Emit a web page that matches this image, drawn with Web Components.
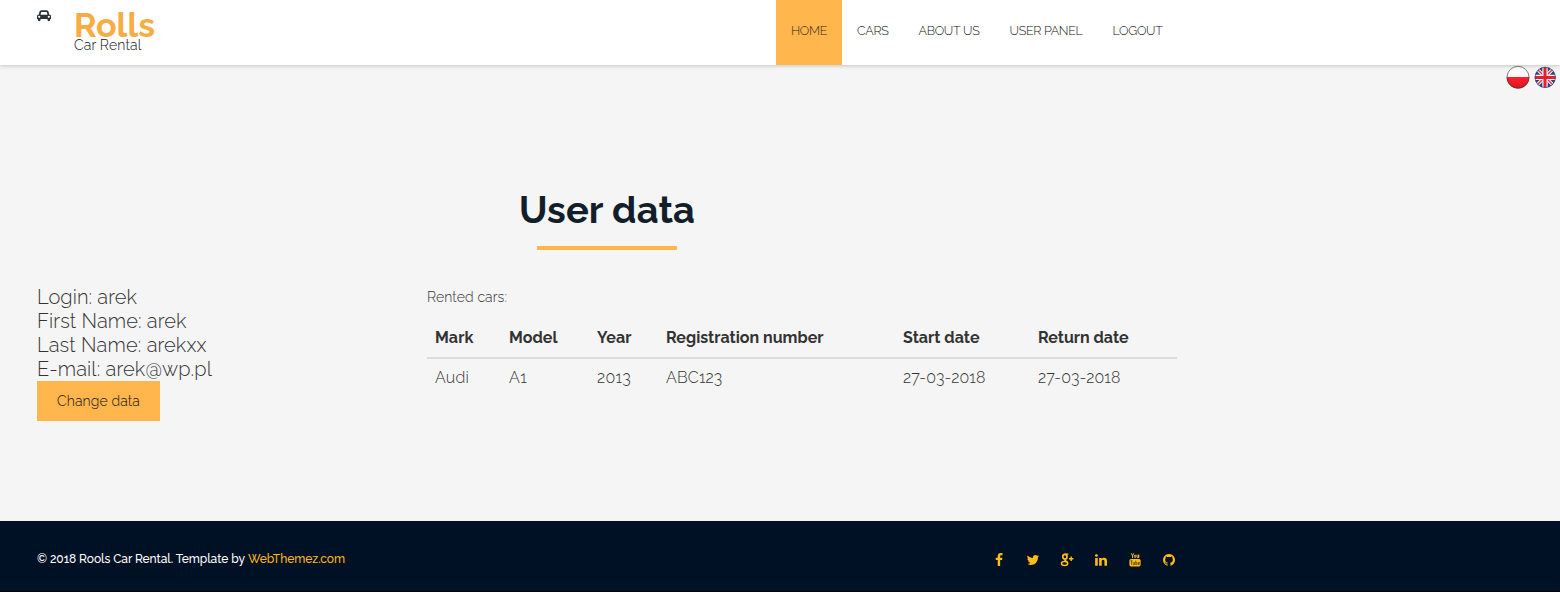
<!DOCTYPE html>
<html lang="en"><head><meta charset="utf-8"><title>Rolls Car Rental</title>
<style>
html,body{margin:0;height:592px;overflow:hidden;background:#f5f5f5}
body{font-family:Raleway,Lato,"Open Sans",sans-serif;font-weight:300;font-variant-numeric:oldstyle-nums;color:#333;font-size:14px}
</style></head><body>
<rolls-page></rolls-page>
<script>
/* Text run tracked out so that it fills the width given in its w attribute. */
customElements.define('fit-text', class extends HTMLElement{
  connectedCallback(){
    if(!this.shadowRoot) this.attachShadow({mode:'open'}).innerHTML='<style>:host{display:inline-block;white-space:nowrap;line-height:inherit}</style><slot></slot>';
    const w=+this.getAttribute('w'), n=this.textContent.length;
    this.style.width='auto';
    this.style.letterSpacing='0';
    const natural=this.getBoundingClientRect().width;
    this.style.letterSpacing=((w-natural)/n).toFixed(3)+'px';
    this.style.width=w+'px';
  }
});

const ICONS={
car:['0 0 2048 1792','<path d="M480 1088q0-66-47-113t-113-47-113 47-47 113 47 113 113 47 113-47 47-113zm36-320h1016l-89-357q-2-8-14-17.5t-21-9.5h-768q-9 0-21 9.5t-14 17.5zm1372 320q0-66-47-113t-113-47-113 47-47 113 47 113 113 47 113-47 47-113zm160-96v384q0 14-9 23t-23 9h-96v128q0 80-56 136t-136 56-136-56-56-136v-128h-1024v128q0 80-56 136t-136 56-136-56-56-136v-128h-96q-14 0-23-9t-9-23v-384q0-93 65.5-158.5t158.5-65.5h28l105-419q23-94 104-157.5t179-63.5h768q98 0 179 63.5t104 157.5l105 419h28q93 0 158.5 65.5t65.5 158.5z"/>'],
facebook:['0 0 1792 1792','<path d="M1343 12v264h-157q-86 0-116 36t-30 108v189h293l-39 296h-254v759h-306v-759h-255v-296h255v-218q0-186 104-288.5t277-102.5q147 0 228 12z"/>'],
twitter:['0 0 1792 1792','<path d="M1684 408q-67 98-162 167 1 14 1 42 0 130-38 259.5t-115.5 248.5-184.5 210.5-258 146-323 54.5q-271 0-496-145 35 4 78 4 225 0 401-138-105-2-188-64.5t-114-159.5q33 5 61 5 43 0 85-11-112-23-185.5-111.5t-73.5-205.5v-4q68 38 146 41-66-44-105-115t-39-154q0-88 44-163 121 149 294.5 238.5t371.5 99.5q-8-38-8-74 0-134 94.5-228.5t228.5-94.5q140 0 236 102 109-21 205-78-37 115-142 178 93-10 186-50z"/>'],
gplus:['0 0 14 14','<g fill="none" stroke="currentColor"><ellipse cx="4.9" cy="3.8" rx="2.1" ry="2.4" stroke-width="1.7"/><ellipse cx="4.600" cy="10.600" rx="3.100" ry="2" stroke-width="1.500"/><path d="M4.600 1.200h3.800M5 6Q3.800 7 5.500 7.600T7.500 9.500" stroke-width="1.300"/><path d="M9 5.800h4.400M11.200 3.600v4.400" stroke-width="1.400"/></g>'],
linkedin:['0 0 1792 1792','<path d="M477 625v991h-330v-991h330zm21-306q1 73-50.5 122t-135.5 49h-2q-82 0-132-49t-50-122q0-74 51.5-122.5t134.5-48.5 133 48.5 51 122.5zm1166 729v568h-329v-530q0-105-40.5-164.5t-126.5-59.5q-63 0-105.5 34.5t-63.5 85.5q-11 30-11 81v553h-329q2-399 2-647t-1-296l-1-48h329v144h-2q20-32 41-56t56.5-52 87-43.5 114.5-15.5q171 0 275 113.5t104 332.5z"/>'],
youtube:['0 0 14 14','<path d="M3 6h8q1.600 0 1.600 1.600v4.200q0 1.600-1.600 1.600H3q-1.600 0-1.600-1.600V7.600Q1.400 6 3 6z"/><g fill="none" stroke="currentColor"><path d="M3.300.3l1.200 2.500V5M5.700.3L4.500 2.800M9 1.700v2.500q.9.800 1.700 0V1.700M10.700 4.800V1.700" stroke-width="1"/><ellipse cx="7" cy="3.300" rx=".75" ry="1.300" stroke-width="1"/></g><g fill="none" stroke="#010f25" stroke-width=".5"><path d="M2.300 7.800h2.400M3.500 7.800v4.300M5.200 9v2.700h1.300V9M7.700 7.600v4.100h1.100V9.400H7.700M11.500 11.500h-1.400V9.400h1.300v1.200h-1.300"/></g>'],
github:['0 0 1792 1792','<path d="M896 128q209 0 385.500 103t279.500 279.500 103 385.500q0 251-146.500 451.500t-378.500 277.500q-27 5-40-7t-13-30q0-3 .5-76.500t.5-134.500q0-97-52-142 57-6 102.500-18t94-39 81-66.500 53-105 20.500-150.500q0-119-79-206 37-91-8-204-28-9-81 11t-92 44l-38 24q-93-26-192-26t-192 26q-16-11-42.500-27t-83.500-38.500-85-13.500q-45 113-8 204-79 87-79 206 0 85 20.500 150t52.500 105 80.500 67 94 39 102.500 18q-39 36-49 103-21 10-45 15t-57 5-65.500-21.500-55.500-62.500q-19-32-48.500-52t-49.500-24l-20-3q-21 0-29 4.500t-5 11.500 9 14 13 12l7 5q22 10 43.500 38t31.500 51l10 23q13 38 44 61.500t67 30 69.500 7 55.500-3.500l23-4q0 38 .5 88.500t.5 54.500q0 18-13 30t-40 7q-232-77-378.500-277.500t-146.500-451.500q0-209 103-385.500t279.500-279.500 385.500-103z"/>'],
poland:['0 0 24 24','<defs><clipPath id="c"><circle cx="12" cy="12.300" r="11.300"/></clipPath><linearGradient id="r" x2="0" y2="1"><stop offset="0" stop-color="#ff1f2b"/><stop offset=".5" stop-color="#f01a24"/><stop offset="1" stop-color="#c41a20"/></linearGradient></defs><g clip-path="url(#c)"><path fill="#fbfbfb" d="M0 0h24v12H0z"/><path fill="url(#r)" d="M0 12h24v12H0z"/></g><circle cx="12" cy="12.300" r="11" fill="none" stroke="#3c3434" stroke-opacity=".7" stroke-width=".9"/>'],
britain:['0 0 24 24','<defs><clipPath id="c"><circle cx="12.200" cy="12.400" r="10.400"/></clipPath></defs><g clip-path="url(#c)"><path fill="#24478c" d="M0 0h24v24H0z"/><path stroke="#f0eef4" stroke-width="3.400" d="M2 2l20 20M22 2L2 22"/><path stroke="#dd3a4a" stroke-width="1.400" d="M2 2l20 20M22 2L2 22"/><path stroke="#f5f2f5" stroke-width="5.400" d="M12 0v24M0 12.400h24"/><path stroke="#e5202f" stroke-width="3" d="M12 0v24M0 12.400h24"/></g><circle cx="12.200" cy="12.400" r="10.200" fill="none" stroke="#27345c" stroke-opacity=".8" stroke-width=".7"/>']
};
customElements.define('ui-icon', class extends HTMLElement{
  connectedCallback(){
    const [box,art]=ICONS[this.getAttribute('name')];
    this.attachShadow({mode:'open'}).innerHTML=`<style>:host{display:block;width:14px;height:14px}svg{display:block;width:100%;height:100%;fill:currentColor}</style><svg viewBox="${box}">${art}</svg>`;
  }
});

function element(name, html){
  customElements.define(name, class extends HTMLElement{
    connectedCallback(){ this.attachShadow({mode:'open'}).innerHTML=html; }
  });
}
element('nav-item',`<style>:host{display:block;height:65px;padding:0 14.500px 0 15.500px;box-sizing:border-box;line-height:62px;font-size:12.500px;font-weight:300;color:#111}:host([active]){background:#ffb64d;color:#35291a}</style><slot></slot>`);
element('site-header',`<style>
:host{display:block;height:65px;background:#fff;box-shadow:0 1px 4px rgba(0,0,0,.2);position:relative}
.in{width:1140px;margin-left:37px;display:flex;justify-content:space-between}
.brand{display:flex;color:#111}
ui-icon{width:14px;height:13px;margin:9px 23px 0 0;color:#2a3036}
.t{display:flex;flex-direction:column;align-items:flex-start;padding-top:13px}
.name{font-size:34px;line-height:24px;font-weight:700;color:#f9ac42}
.sub{font-size:14px;line-height:16px}
nav{display:flex}
</style><div class="in"><div class="brand"><ui-icon name="car"></ui-icon><div class="t"><fit-text class="name" w="81">Rolls</fit-text><fit-text class="sub" w="67.500">Car Rental</fit-text></div></div>
<nav><nav-item active><fit-text w="36">HOME</fit-text></nav-item><nav-item><fit-text w="31.500">CARS</fit-text></nav-item><nav-item><fit-text w="61">ABOUT US</fit-text></nav-item><nav-item><fit-text w="73">USER PANEL</fit-text></nav-item><nav-item><fit-text w="50">LOGOUT</fit-text></nav-item></nav></div>`);
element('language-switch',`<style>:host{display:flex;justify-content:flex-end;gap:3px;padding:0 3px 1px 0;height:24px}ui-icon{width:24px;height:24px}</style><ui-icon name="poland"></ui-icon><ui-icon name="britain"></ui-icon>`);
element('section-title',`<style>:host{display:flex;flex-direction:column;align-items:center;width:1140px;margin-left:37px;padding-top:96px;color:#131e2b;font-size:38px;line-height:48px;font-weight:700}i{display:block;width:140px;height:4px;background:#ffb64d;margin-top:12px}</style><slot></slot><i></i>`);
element('user-card',`<style>:host{display:flex;flex-direction:column;align-items:flex-start;font-size:20px;line-height:24px;width:390px}
button{font:inherit;font-size:14px;line-height:20px;border:0;background:#ffb64d;color:#111;width:123px;height:40px;padding:0}</style>
<fit-text w="100">Login: arek</fit-text><fit-text w="149.500">First Name: arek</fit-text><fit-text w="169.500">Last Name: arekxx</fit-text><fit-text w="175">E-mail: arek@wp.pl</fit-text><button><fit-text w="83">Change data</fit-text></button>`);
element('rental-table',`<style>:host{display:block;width:750px;padding-top:2px}
p{margin:0;line-height:20px}
.g{display:grid;grid-template-columns:74px 88px 69px 237px 135px 1fr;padding-left:8px;font-size:16px;line-height:24px}
.h{font-weight:700;border-bottom:2px solid #ddd;margin-top:19px;height:31px}
.r{padding-top:7px}</style>
<p><fit-text w="80">Rented cars:</fit-text></p>
<div class="g h"><span><fit-text w="38.500">Mark</fit-text></span><span><fit-text w="48.500">Model</fit-text></span><span><fit-text w="34.500">Year</fit-text></span><span><fit-text w="157.500">Registration number</fit-text></span><span><fit-text w="76.500">Start date</fit-text></span><span><fit-text w="90.500">Return date</fit-text></span></div>
<div class="g r"><span><fit-text w="34">Audi</fit-text></span><span><fit-text w="18">A1</fit-text></span><span><fit-text w="34">2013</fit-text></span><span><fit-text w="56.500">ABC123</fit-text></span><span><fit-text w="82.500">27-03-2018</fit-text></span><span><fit-text w="82.500">27-03-2018</fit-text></span></div>`);
element('site-footer',`<style>:host{display:block;height:70px;background:#001025;border-bottom:1px solid #000;color:#fff;font-size:12px;font-weight:500}
.in{width:1140px;margin-left:37px;display:flex;justify-content:space-between;padding-top:28px;line-height:20px}
.a{color:#ffb90f}.s{display:flex;gap:20px;padding-top:4px;color:#ffbf10;padding-right:1px}ui-icon{width:14px;height:14px}
</style><div class="in"><div><fit-text w="208">© 2018 Rools Car Rental. Template by</fit-text><fit-text class="a" w="97" style="margin-left:3px">WebThemez.com</fit-text></div><div class="s"><ui-icon name="facebook"></ui-icon><ui-icon name="twitter"></ui-icon><ui-icon name="gplus"></ui-icon><ui-icon name="linkedin"></ui-icon><ui-icon name="youtube"></ui-icon><ui-icon name="github"></ui-icon></div></div>`);
element('rolls-page',`<style>:host{display:flex;flex-direction:column;height:592px}
main{flex:1}.cols{display:flex;margin:35px 0 0 37px}</style>
<site-header></site-header><main><language-switch></language-switch><section-title><fit-text w="176">User data</fit-text></section-title><div class="cols"><user-card></user-card><rental-table></rental-table></div></main><site-footer></site-footer>`);
</script></body></html>
